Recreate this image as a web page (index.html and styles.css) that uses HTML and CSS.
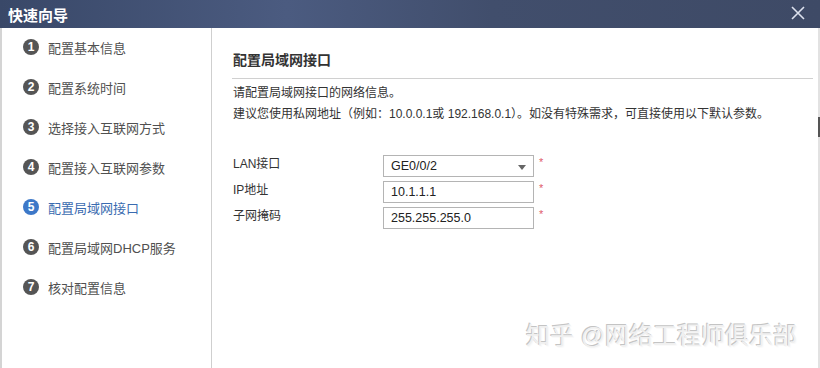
FILE: index.html
```html
<!DOCTYPE html>
<html>
<head>
  <meta charset="utf-8">
  <link rel="stylesheet" href="styles.css">
</head>
<body>
<div class="dialog">
  <div class="titlebar">
    <span class="title">快速向导</span>
    <svg class="close" width="14" height="14" viewBox="0 0 14 14">
      <path d="M1 1 L13 13 M13 1 L1 13" stroke="#dde2ee" stroke-width="1.6" fill="none"/>
    </svg>
  </div>
  <div class="body">
    <div class="steps">
      <div class="step"><span class="num">1</span>配置基本信息</div>
      <div class="step"><span class="num">2</span>配置系统时间</div>
      <div class="step"><span class="num">3</span>选择接入互联网方式</div>
      <div class="step"><span class="num">4</span>配置接入互联网参数</div>
      <div class="step active"><span class="num">5</span>配置局域网接口</div>
      <div class="step"><span class="num">6</span>配置局域网DHCP服务</div>
      <div class="step"><span class="num">7</span>核对配置信息</div>
    </div>
    <div class="content">
      <h2 class="heading">配置局域网接口</h2>
      <div class="intro">
        <p>请配置局域网接口的网络信息。</p>
        <p>建议您使用私网地址（例如：10.0.0.1或 192.168.0.1）。如没有特殊需求，可直接使用以下默认参数。</p>
      </div>
      <div class="form">
        <div class="row">
          <label>LAN接口</label>
          <div class="field select">GE0/0/2<span class="arrow"></span></div>
          <span class="req">*</span>
        </div>
        <div class="row">
          <label>IP地址</label>
          <div class="field">10.1.1.1</div>
          <span class="req">*</span>
        </div>
        <div class="row">
          <label>子网掩码</label>
          <div class="field">255.255.255.0</div>
          <span class="req">*</span>
        </div>
      </div>
      <div class="watermark">知乎 @网络工程师俱乐部</div>
    </div>
  </div>
</div>
</body>
</html>
```
FILE: styles.css
```css
body {
  margin: 0;
  font-family: "Liberation Sans", "Noto Sans CJK SC", sans-serif;
  background: #fff;
}
.dialog {
  width: 820px;
  height: 368px;
  display: flex;
  flex-direction: column;
  overflow: hidden;
}
.titlebar {
  height: 28px;
  display: flex;
  align-items: center;
  justify-content: space-between;
  padding: 0 15px 0 8px;
  background: linear-gradient(to right, #394868, #4b5b80 35%, #414e6c 60%, #3e4a66);
}
.title {
  color: #fff;
  font-size: 15px;
  font-weight: bold;
}
.close {
  margin-top: -2px;
}
.body {
  flex: 1;
  display: flex;
}
.steps {
  border-left: 2px solid #d4d4d4;
  border-right: 1px solid #cfcfcf;
  box-sizing: border-box;
  width: 212px;
}
.step {
  height: 40px;
  display: flex;
  align-items: center;
  padding-left: 21px;
  font-size: 13px;
  color: #505050;
  margin-top: -1px;
  margin-bottom: 1px;
}
.num {
  width: 16px;
  height: 16px;
  border-radius: 50%;
  background: #555;
  color: #fff;
  font-size: 12px;
  font-weight: bold;
  line-height: 16px;
  text-align: center;
  margin-right: 9px;
}
.step.active {
  color: #3a6bb0;
}
.step.active .num {
  background: #3d78c8;
}
.content {
  flex: 1;
  position: relative;
  padding: 0 5px 0 20px;
  border-right: 2px solid #e2e2e2;
}
.content::after {
  content: "";
  position: absolute;
  right: -2px;
  top: 89px;
  width: 2px;
  height: 20px;
  background: #555;
}
.heading {
  margin: 0;
  padding: 22px 0 8px 1px;
  font-size: 14px;
  line-height: 20px;
  font-weight: bold;
  color: #333;
  border-bottom: 1px solid #d0d0d0;
}
.intro {
  padding-top: 4px;
  padding-left: 1px;
}
.intro p {
  margin: 0;
  font-size: 12px;
  line-height: 21px;
  color: #333;
}
.form {
  margin-top: 30px;
  display: flex;
  flex-direction: column;
  gap: 4px;
}
.row {
  display: flex;
  align-items: flex-start;
}
.row label {
  width: 150px;
  padding-left: 1px;
  font-size: 12px;
  line-height: 18px;
  color: #333;
}
.field {
  width: 151px;
  height: 22px;
  box-sizing: border-box;
  border: 1px solid #b4b4b4;
  padding-left: 7px;
  font-size: 12.5px;
  line-height: 21px;
  color: #222;
  position: relative;
}
.arrow {
  position: absolute;
  right: 7px;
  top: 9px;
  border-left: 4px solid transparent;
  border-right: 4px solid transparent;
  border-top: 5px solid #666;
}
.req {
  margin-left: 5px;
  color: #e05a6a;
  font-size: 11px;
  line-height: 14px;
}
.watermark {
  position: absolute;
  left: 314px;
  top: 288px;
  font-size: 24px;
  color: #f0f0f0;
  text-shadow: -1px -1px 0 #c4c4c4, 1px 1px 0 #fafafa;
  white-space: nowrap;
}
```
